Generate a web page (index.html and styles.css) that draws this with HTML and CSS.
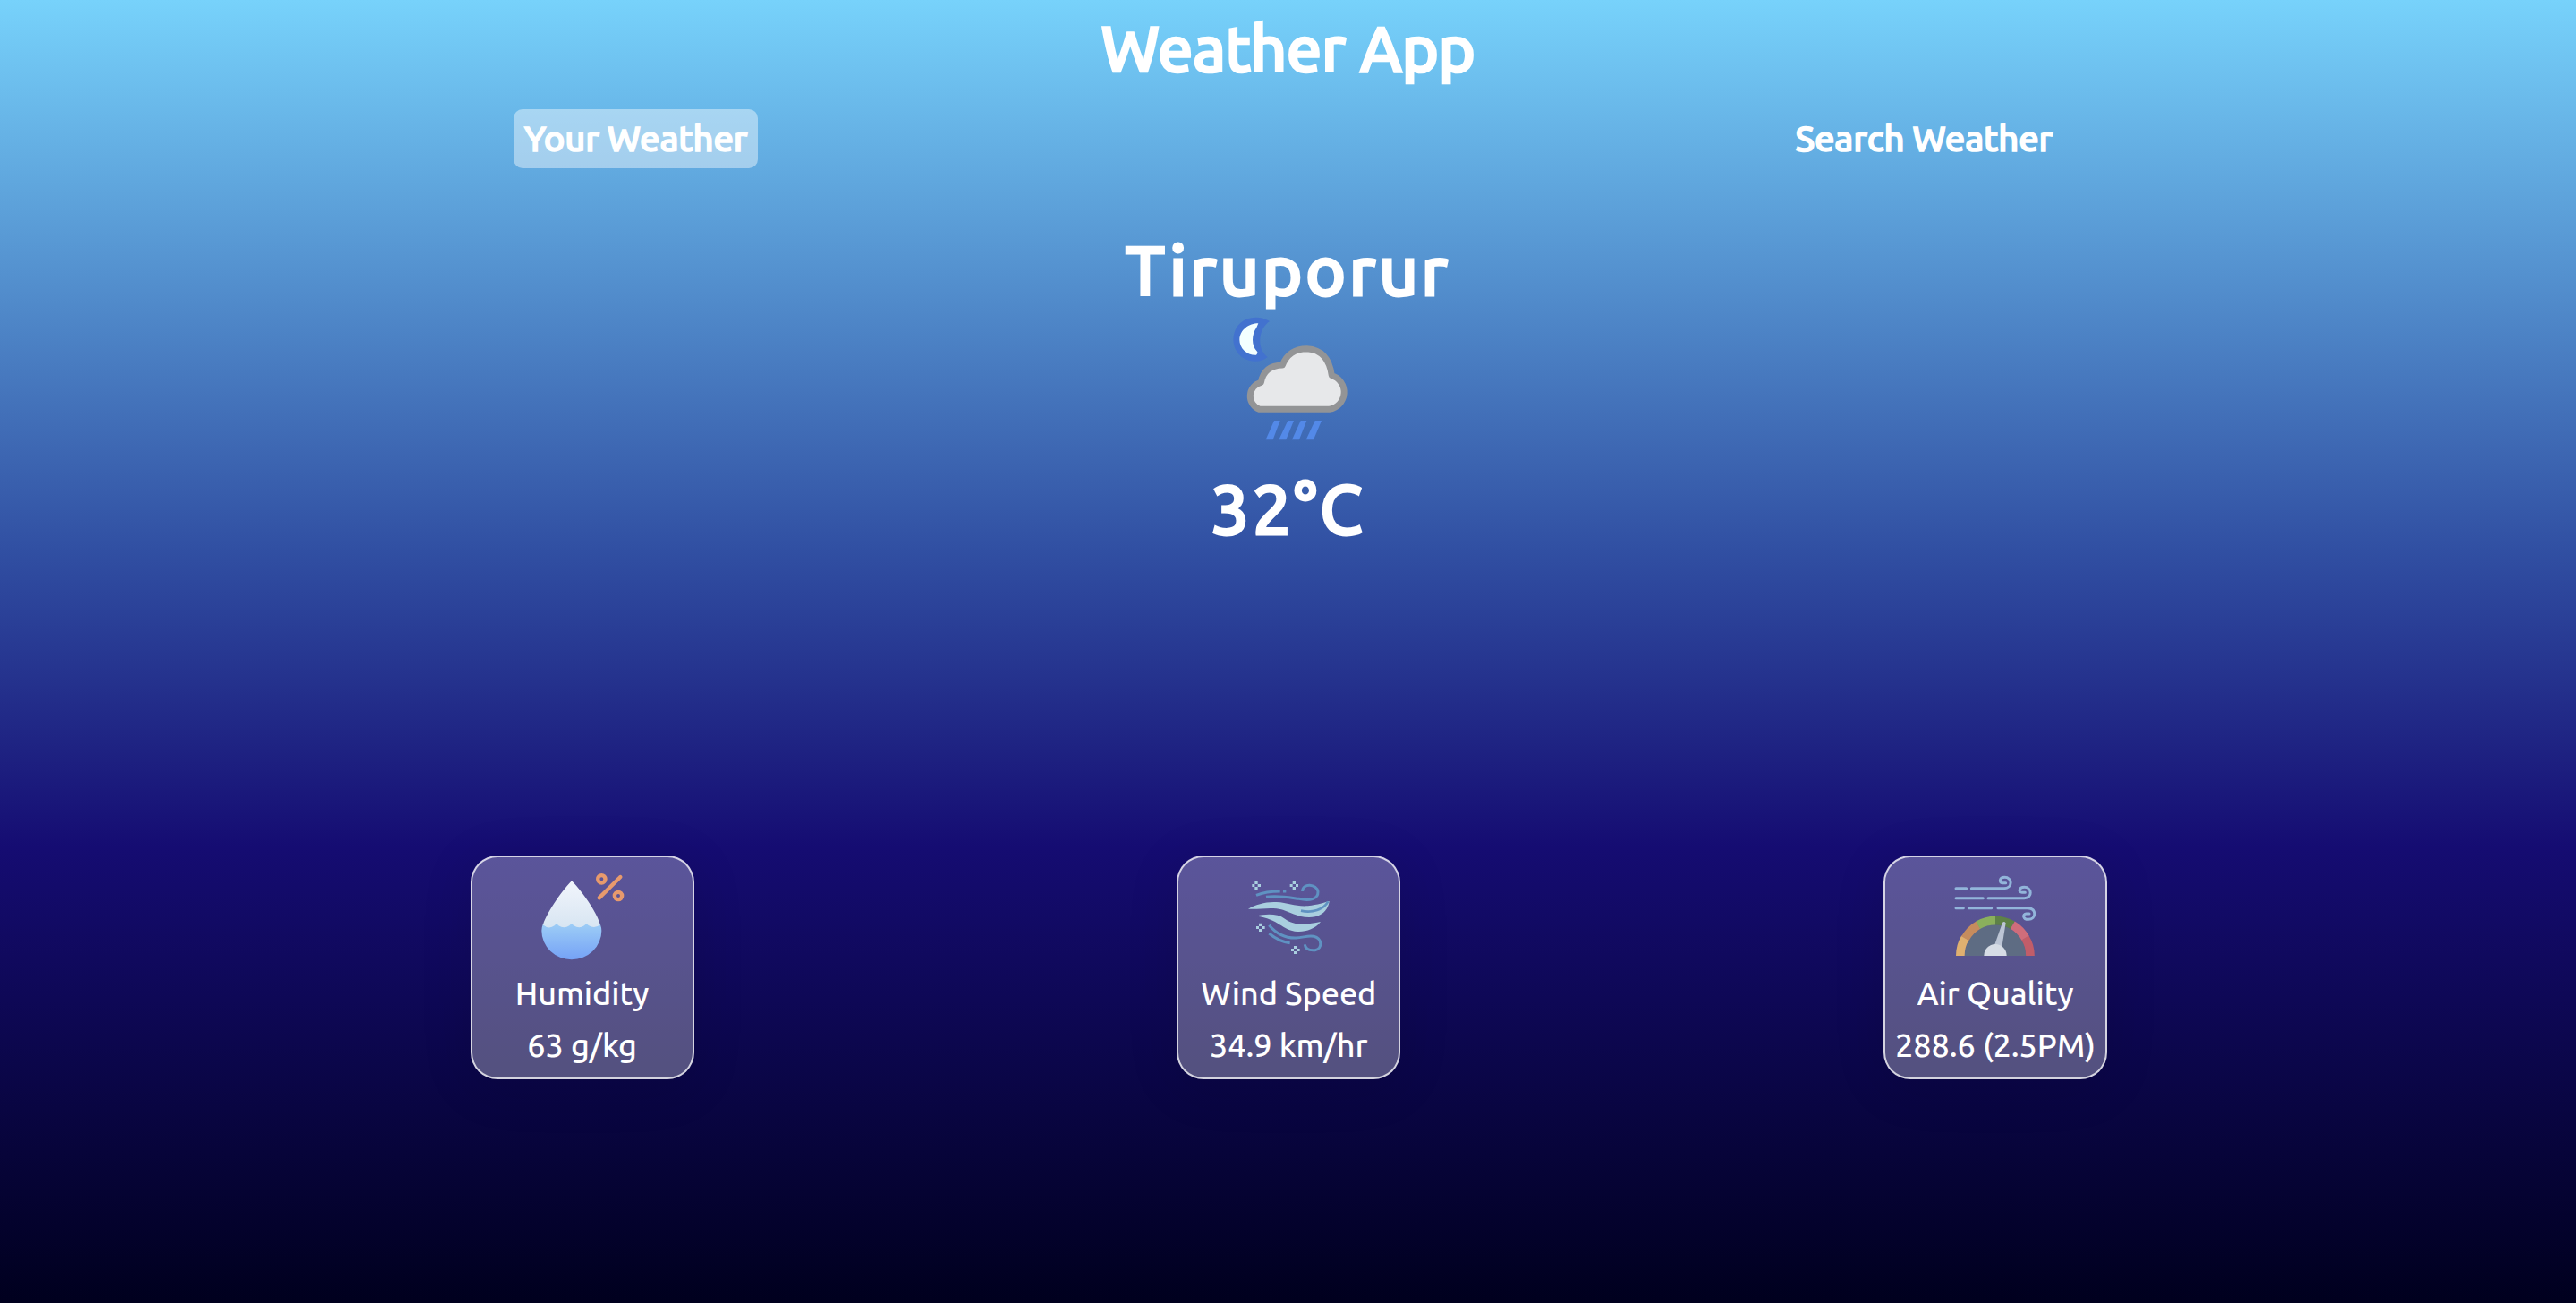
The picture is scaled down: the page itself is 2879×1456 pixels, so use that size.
FILE: index.html
```html
<!DOCTYPE html>
<html lang="en">
<head>
<meta charset="utf-8">
<title>Weather App</title>
<link rel="stylesheet" href="styles.css">
</head>
<body>
<main class="app">
  <h1 class="title">Weather App</h1>
  <nav class="tabs">
    <button class="tab tab-active">Your Weather</button>
    <button class="tab">Search Weather</button>
  </nav>
  <section class="current">
    <h2 class="place">Tiruporur</h2>
    <svg class="condition" viewBox="0 0 450 480" aria-hidden="true">
      <path d="M147 57C112 34 57 42 36 78C15 116 26 160 60 181C89 198 123 193 140 177C104 150 107 84 147 57Z" fill="#4272cf"/>
      <path d="M109 64C78 64 47 85 46 119C46 147 70 171 102 170C105 166 108 161 105 158C85 139 86 101 103 78Z" fill="#f3ffff"/>
      <path d="M113 352A47 47 0 0 1 118 262Q128 205 190 204Q211 149 272 149Q344 153 355 239A58 58 0 0 1 347 352Z" fill="#e7e8ea" stroke="#939496" stroke-width="21" stroke-linejoin="round"/>
      <g fill="#5389e8"><path d="M162 390h20l-24 64h-24z"/><path d="M208 390h20l-26 64h-24z"/><path d="M251 390h20l-25 64h-24z"/><path d="M299 390h22l-27 64h-25z"/></g>
    </svg>
    <p class="temp">32°C</p>
  </section>
  <section class="cards">
    <article class="card">
      <svg class="icon" viewBox="257 84 300 300" aria-hidden="true">
        <defs>
          <linearGradient id="dry" x1="0" y1="0" x2="0" y2="1"><stop offset="0" stop-color="#f1f5fc"/><stop offset="1" stop-color="#d6e4f1"/></linearGradient>
          <linearGradient id="wet" x1="0" y1="0" x2="0" y2="1"><stop offset="0" stop-color="#9dcdf6"/><stop offset="1" stop-color="#75a2f6"/></linearGradient>
        </defs>
        <path d="M371 118C392 138 454 216 467 267Q420 300 370 276Q320 300 274 267C288 218 350 138 371 118Z" fill="url(#dry)"/>
        <path d="M274 265Q294 282 313 268L320 261L327 268Q345 280 363 268L370 261L378 268Q396 280 413 268L420 261L427 267Q447 280 467 265Q471 276 471 285A100 96 0 0 1 270 285Q270 274 274 265Z" fill="url(#wet)"/>
        <g fill="none" stroke="#e79a6d" stroke-width="13" stroke-linecap="round"><circle cx="471" cy="112" r="12.500"/><circle cx="527" cy="168" r="12.500"/><path d="M534 105L463 175"/></g>
      </svg>
      <p class="label">Humidity</p>
      <p class="value">63 g/kg</p>
    </article>
    <article class="card">
      <svg class="icon" viewBox="255 84 300 300" aria-hidden="true">
        <g fill="none" stroke="#5f92c2" stroke-width="9">
          <path d="M297 166Q330 153 377 153"/><path d="M387 153h10"/>
          <path d="M330 172C370 166 410 174 440 178C475 186 505 180 504 154C500 128 452 124 452 153"/>
          <path d="M340 266C360 290 390 310 430 309C455 308 470 300 490 304C517 310 521 345 494 350C470 352 461 342 460 331"/>
          <path d="M340 294C362 312 385 323 410 326"/>
        </g>
        <path d="M270 212C295 197 330 187 365 189C405 191 430 205 470 202C505 198 525 190 542 186C540 205 525 240 474 240C430 240 405 216 365 211C335 207 305 214 270 212Z" fill="#a9cfdf"/>
        <path d="M297 236C330 228 368 227 393 245C425 270 470 264 513 255C494 279 465 289 436 288C382 284 373 244 297 236Z" fill="#a9cfdf"/>
        <path d="M447 218C485 226 522 215 538 187" fill="none" stroke="#5f92c2" stroke-width="8"/>
        <g fill="#a9cfdf">
          <path d="M292 120h10v9h-10zM292 138h10v9h-10zM283 129h9v9h-9zM302 129h10v9h-10z"/>
          <path d="M419 120h10v9h-10zM419 138h10v9h-10zM410 129h9v9h-9zM429 129h9v9h-9z"/>
          <path d="M306 260h10v10h-10zM306 279h10v9h-10zM297 270h9v9h-9zM316 270h10v9h-10z"/>
          <path d="M423 336h10v9h-10zM423 354h10v9h-10zM414 345h9v9h-9zM433 345h10v9h-10z"/>
        </g>
      </svg>
      <p class="label">Wind Speed</p>
      <p class="value">34.9 km/hr</p>
    </article>
    <article class="card">
      <svg class="icon" viewBox="255 84 300 300" aria-hidden="true">
        <g fill="none" stroke="#92b5da" stroke-width="9" stroke-linecap="round" stroke-linejoin="round">
          <path d="M273 143h35M325 143H434C464 143 463 106 436 106C419 106 416 124 429 125H440"/>
          <path d="M273 176h91M381 176H502C531 176 528 139 502 139C484 139 481 157 495 157H505"/>
          <path d="M273 209h25M316 209h76M414 209H514C545 209 542 247 516 247C497 247 495 229 509 228H519"/>
        </g>
        <path d="M302 369A103 104 0 0 1 508 369Z" fill="#5e6c83"/>
        <g fill="none" stroke-width="29">
          <path d="M287.500 369Q287.500 336 304 309" stroke="#dfb070"/>
          <path d="M304 311Q320 282 348 266" stroke="#c68c5d"/>
          <path d="M347 266Q374 251 405 251" stroke="#8ab05c"/>
          <path d="M405 251Q436 251 463 266" stroke="#5e8147"/>
          <path d="M463 266Q490 282 506 310" stroke="#cf6d7b"/>
          <path d="M505 309Q522 336 522 369" stroke="#c15d69"/>
        </g>
        <path d="M402 334L429 258Q434 252 440 259L427 340Z" fill="#bcc5d5"/>
        <path d="M367 369A38 39 0 0 1 443 369Z" fill="#d6dce5"/>
      </svg>
      <p class="label">Air Quality</p>
      <p class="value">288.6 (2.5PM)</p>
    </article>
  </section>
</main>
</body>
</html>
```
FILE: styles.css
```css
* { box-sizing: border-box; margin: 0; padding: 0; }

body {
  min-height: 100vh;
  background: linear-gradient(180deg, #77d2fb 0%, #3150a3 42%, #150c72 65%, #00001e 100%);
  color: #fff;
  font-family: Ubuntu, "Noto Sans", sans-serif;
  font-weight: 500;
}

.app { display: flex; flex-direction: column; }

.title {
  height: 110px;
  font-size: 70.4px;
  font-weight: 500;
  line-height: 107px;
  letter-spacing: -0.6px;
  text-align: center;
  -webkit-text-stroke: 2.6px #fff;
}

.tabs {
  display: flex;
  justify-content: space-between;
  height: 78px;
  padding: 12px 573px 0 574px;
}

.tab {
  height: 66px;
  padding: 0 12px;
  border: 0;
  border-radius: 10px;
  background: transparent;
  color: inherit;
  font: 500 40px/66px Ubuntu, "Noto Sans", sans-serif;
  letter-spacing: -0.18px;
  white-space: nowrap;
  -webkit-text-stroke: 1.6px #fff;
}

.tab-active { background: rgba(255, 255, 255, 0.42); }

.current {
  display: flex;
  flex-direction: column;
  align-items: center;
  height: 768px;
  padding-top: 64px;
}

.place, .temp {
  font-size: 77px;
  font-weight: 500;
  line-height: 100px;
  letter-spacing: 3px;
  -webkit-text-stroke: 2.8px #fff;
}

.condition { width: 150px; height: 160px; margin: -12px 0 19px 10px; }

.cards {
  display: flex;
  justify-content: space-between;
  padding: 0 524px 0 525.500px;
}

.card {
  display: flex;
  flex-direction: column;
  align-items: center;
  width: 250px;
  height: 250px;
  padding-top: 15px;
  border: 2px solid rgba(255, 255, 255, 0.75);
  border-radius: 30px;
  background: rgba(255, 255, 255, 0.3);
  box-shadow: 0 8px 60px rgba(0, 0, 0, 0.1);
  white-space: nowrap;
}

.icon { width: 100px; height: 100px; }

.label, .value { font-size: 36px; line-height: 58px; letter-spacing: -0.1px; }
.label { margin-top: 8px; }
```
